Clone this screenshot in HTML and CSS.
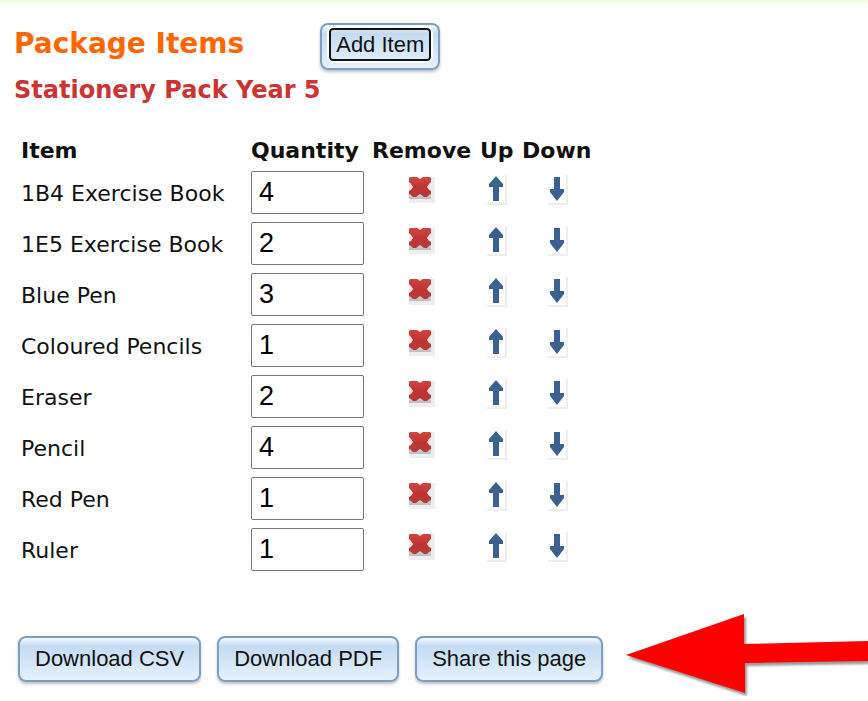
FILE: index.html
```
<!DOCTYPE html>
<html lang="en">
<head>
    <meta charset="UTF-8">
    <meta name="viewport" content="width=device-width, initial-scale=1.0">
    <title>Package Items</title>
    <link rel="stylesheet" href="styles.css">
</head>
<body>
    <svg class="symbols" aria-hidden="true">
        <defs>
            <linearGradient id="red" x1="0" y1="0" x2="0" y2="1">
                <stop offset="0" stop-color="#cf4640"></stop>
                <stop offset="0.5" stop-color="#c03432"></stop>
                <stop offset="1" stop-color="#b23a38"></stop>
            </linearGradient>
            <linearGradient id="shade" x1="0" y1="0" x2="0" y2="1">
                <stop offset="0.4" stop-color="#f4f4f4"></stop>
                <stop offset="1" stop-color="#bcbcbc"></stop>
            </linearGradient>
        </defs>
        <symbol id="remove" viewBox="0 0 26 26">
            <path fill="#eeeeee" d="M0 0h26v26H0z"></path>
            <path fill="url(#shade)" d="M0 0h22v22H0z"></path>
            <path fill="#f6e4e4" d="M7 0h8l-4 4zM0 6l4 4-4 4zM22 6l-4 4 4 4z"></path>
            <path fill="url(#red)" d="M0 1L1 0H8L11 2L14 0H21L22 1V5L20 7L18 10L20 13L22 14V17L20 18L18 20H15L11 17L7 20H4L2 18L0 17V14L2 13L4 10L2 7L0 5z"></path>
        </symbol>
        <symbol id="up" viewBox="0 0 20 30">
            <path fill="#eeeeee" d="M18 0h2v30H0v-2h18z"></path>
            <path fill="#3a6190" d="M9 1L16 9V12H12V26H6V12H2V9z"></path>
        </symbol>
        <symbol id="down" viewBox="0 0 20 30">
            <path fill="#eeeeee" d="M18 0h2v30H0v-2h18z"></path>
            <path fill="#3a6190" d="M6 2H12V14H16V17L9 26L2 17V14H6z"></path>
        </symbol>
    </svg>

    <main class="page">
        <header class="page-header">
            <h1>Package Items</h1>
            <button type="button" class="btn btn-add"><span>Add Item</span></button>
        </header>
        <h2>Stationery Pack Year 5</h2>

        <table class="items">
            <thead>
                <tr>
                    <th class="col-item">Item</th>
                    <th class="col-quantity">Quantity</th>
                    <th class="col-remove">Remove</th>
                    <th class="col-up">Up</th>
                    <th class="col-down">Down</th>
                </tr>
            </thead>
            <tbody>
                <tr>
                    <td><label for="qty1">1B4 Exercise Book</label></td>
                    <td><input type="text" id="qty1" value="4"></td>
                    <td class="action"><button type="button" aria-label="Remove"><svg class="icon-remove"><use href="#remove"></use></svg></button></td>
                    <td class="action"><button type="button" aria-label="Up"><svg class="icon-move"><use href="#up"></use></svg></button></td>
                    <td class="action"><button type="button" aria-label="Down"><svg class="icon-move"><use href="#down"></use></svg></button></td>
                </tr>
                <tr>
                    <td><label for="qty2">1E5 Exercise Book</label></td>
                    <td><input type="text" id="qty2" value="2"></td>
                    <td class="action"><button type="button" aria-label="Remove"><svg class="icon-remove"><use href="#remove"></use></svg></button></td>
                    <td class="action"><button type="button" aria-label="Up"><svg class="icon-move"><use href="#up"></use></svg></button></td>
                    <td class="action"><button type="button" aria-label="Down"><svg class="icon-move"><use href="#down"></use></svg></button></td>
                </tr>
                <tr>
                    <td><label for="qty3">Blue Pen</label></td>
                    <td><input type="text" id="qty3" value="3"></td>
                    <td class="action"><button type="button" aria-label="Remove"><svg class="icon-remove"><use href="#remove"></use></svg></button></td>
                    <td class="action"><button type="button" aria-label="Up"><svg class="icon-move"><use href="#up"></use></svg></button></td>
                    <td class="action"><button type="button" aria-label="Down"><svg class="icon-move"><use href="#down"></use></svg></button></td>
                </tr>
                <tr>
                    <td><label for="qty4">Coloured Pencils</label></td>
                    <td><input type="text" id="qty4" value="1"></td>
                    <td class="action"><button type="button" aria-label="Remove"><svg class="icon-remove"><use href="#remove"></use></svg></button></td>
                    <td class="action"><button type="button" aria-label="Up"><svg class="icon-move"><use href="#up"></use></svg></button></td>
                    <td class="action"><button type="button" aria-label="Down"><svg class="icon-move"><use href="#down"></use></svg></button></td>
                </tr>
                <tr>
                    <td><label for="qty5">Eraser</label></td>
                    <td><input type="text" id="qty5" value="2"></td>
                    <td class="action"><button type="button" aria-label="Remove"><svg class="icon-remove"><use href="#remove"></use></svg></button></td>
                    <td class="action"><button type="button" aria-label="Up"><svg class="icon-move"><use href="#up"></use></svg></button></td>
                    <td class="action"><button type="button" aria-label="Down"><svg class="icon-move"><use href="#down"></use></svg></button></td>
                </tr>
                <tr>
                    <td><label for="qty6">Pencil</label></td>
                    <td><input type="text" id="qty6" value="4"></td>
                    <td class="action"><button type="button" aria-label="Remove"><svg class="icon-remove"><use href="#remove"></use></svg></button></td>
                    <td class="action"><button type="button" aria-label="Up"><svg class="icon-move"><use href="#up"></use></svg></button></td>
                    <td class="action"><button type="button" aria-label="Down"><svg class="icon-move"><use href="#down"></use></svg></button></td>
                </tr>
                <tr>
                    <td><label for="qty7">Red Pen</label></td>
                    <td><input type="text" id="qty7" value="1"></td>
                    <td class="action"><button type="button" aria-label="Remove"><svg class="icon-remove"><use href="#remove"></use></svg></button></td>
                    <td class="action"><button type="button" aria-label="Up"><svg class="icon-move"><use href="#up"></use></svg></button></td>
                    <td class="action"><button type="button" aria-label="Down"><svg class="icon-move"><use href="#down"></use></svg></button></td>
                </tr>
                <tr>
                    <td><label for="qty8">Ruler</label></td>
                    <td><input type="text" id="qty8" value="1"></td>
                    <td class="action"><button type="button" aria-label="Remove"><svg class="icon-remove"><use href="#remove"></use></svg></button></td>
                    <td class="action"><button type="button" aria-label="Up"><svg class="icon-move"><use href="#up"></use></svg></button></td>
                    <td class="action"><button type="button" aria-label="Down"><svg class="icon-move"><use href="#down"></use></svg></button></td>
                </tr>
            </tbody>
        </table>

        <footer class="page-actions">
            <button type="button" class="btn">Download CSV</button>
            <button type="button" class="btn">Download PDF</button>
            <button type="button" class="btn">Share this page</button>
            <svg class="pointer" viewBox="0 0 246 84" preserveAspectRatio="xMinYMid slice" aria-hidden="true">
                <path fill="#ff0000" d="M2 43L120 2V32L246 29V49L121 51V81z"></path>
            </svg>
        </footer>
    </main>
</body>
</html>
```
FILE: styles.css
```
* {
    box-sizing: border-box;
}

body {
    margin: 0;
    border-top: 3px solid #f0ffdf;
    background: #fff;
    color: #111;
    font-family: Verdana, "DejaVu Sans", sans-serif;
    font-size: 22px;
    line-height: 28px;
}

.symbols {
    position: absolute;
    width: 0;
    height: 0;
}

.page {
    padding: 20px 0 0 14px;
}

.page-header {
    display: flex;
    align-items: flex-start;
    gap: 76px;
}

h1,
h2 {
    margin: 0;
    line-height: 40px;
}

h1 {
    color: #ff6600;
    font-size: 28px;
    line-height: 42px;
}

h2 {
    color: #cc3333;
    font-size: 24px;
}

.btn {
    height: 46px;
    padding: 0 15px;
    border: 2px solid #7a9fc2;
    border-radius: 8px;
    background: linear-gradient(#f4f9fe 0, #c3dbf2 20%, #e6f2fd 100%);
    box-shadow: 0 2px 3px rgba(0, 0, 0, 0.25);
    color: #111;
    font-family: Arial, "Liberation Sans", sans-serif;
    font-size: 22px;
    cursor: pointer;
}

.btn-add {
    height: 47px;
    padding: 0 7px 4px;
}

/* focus ring inside the button */
.btn-add span {
    display: block;
    padding: 1px 5px 0;
    border: 2px solid #111;
    border-radius: 4px;
    outline: 2px solid #fff;
    line-height: 28px;
}

.items {
    margin: 23px 0 0 3px;
    border-collapse: collapse;
}

.items th,
.items td {
    padding: 4px;
    text-align: left;
}

.items th {
    padding-bottom: 2px;
}

.items label {
    display: block;
    padding-top: 2px;
}

.col-item {
    width: 230px;
}

.col-quantity {
    width: 121px;
}

.col-remove {
    width: 108px;
}

.col-up {
    width: 42px;
}

.col-down {
    width: 80px;
}

.items input {
    display: block;
    width: 113px;
    height: 43px;
    padding: 0 7px 1px;
    border: 1px solid #767676;
    border-radius: 2px;
    background: #fff;
    color: #000;
    font-family: Arial, "Liberation Sans", sans-serif;
    font-size: 27px;
}

.items .action {
    text-align: center;
}

.action button {
    display: flex;
    height: 38px;
    margin: 0 auto;
    padding: 0;
    border: 0;
    background: none;
    cursor: pointer;
}

.icon-remove {
    width: 26px;
    height: 26px;
    margin-top: 3px;
}

.icon-move {
    width: 20px;
    height: 30px;
    margin-top: 1px;
}

.page-actions {
    display: flex;
    align-items: flex-start;
    gap: 16px;
    margin-top: 37px;
    padding-left: 4px;
}

.page-actions .btn {
    flex-shrink: 0;
    margin-top: 24px;
}

.pointer {
    flex: 1;
    min-width: 0;
    height: 84px;
    margin-left: 5px;
    filter: drop-shadow(2px 3px 1px rgba(0, 0, 0, 0.4));
}
```
